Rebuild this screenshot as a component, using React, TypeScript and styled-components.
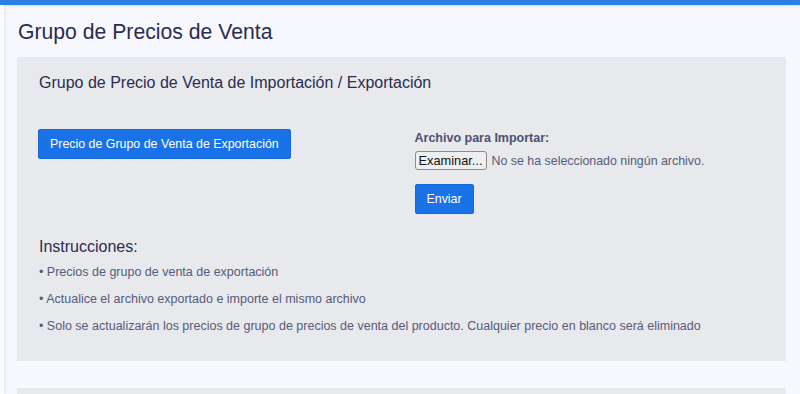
import React from "react";
import styled, { createGlobalStyle } from "styled-components";

const Global = createGlobalStyle`
  html, body { margin: 0; padding: 0; background: #f6f8fd; }
  body { font-family: "Liberation Sans", Arial, sans-serif; overflow: hidden; }
  * { box-sizing: border-box; }
`;

const TopBar = styled.div`
  height: 5px;
  background: #2a7fe3;
  box-shadow: 0 1px 2px rgba(40, 60, 120, 0.15);
`;

const Shell = styled.div`
  display: flex;
  height: 389px;
  overflow: hidden;
`;

const SideEdge = styled.div`
  width: 4px;
  background: #fbfcfe;
  box-shadow: 1px 0 3px rgba(120, 130, 170, 0.18);
  flex: none;
`;

const Main = styled.main`
  flex: 1;
  padding: 14px 14px 0 13px;
  display: flex;
  flex-direction: column;
`;

const PageTitle = styled.h1`
  margin: 0 0 0 1px;
  font-size: 21.2px;
  font-weight: 400;
  line-height: 26px;
  color: #2b2c50;
`;

const Panel = styled.section<{ $top: number }>`
  background: #e8e9ed;
  margin-top: ${(p) => p.$top}px;
  padding: 15px 21px 27px 21px;
  flex: none;
`;

const PanelTitle = styled.h2`
  margin: 0 0 0 1px;
  font-size: 16px;
  font-weight: 400;
  line-height: 22px;
  color: #2b2c50;
`;

const Columns = styled.div`
  display: grid;
  grid-template-columns: 1fr 1fr;
  column-gap: 26px;
  margin-top: 35px;
`;

const Column = styled.div`
  display: flex;
  flex-direction: column;
  align-items: flex-start;
`;

const PrimaryButton = styled.button`
  font-family: "Liberation Sans", Arial, sans-serif;
  background: #1a72e8;
  color: #fff;
  border: 1px solid #1668d8;
  border-radius: 2px;
  font-size: 12.4px;
  height: 30px;
  padding: 0 11px;
  line-height: 28px;
  cursor: pointer;
`;

const Label = styled.label`
  margin-top: 2px;
  font-size: 12.5px;
  font-weight: 700;
  color: #4b5172;
  line-height: 15px;
`;

const FileRow = styled.div`
  display: flex;
  align-items: center;
  gap: 5px;
  margin-top: 5px;
`;

const BrowseButton = styled.span`
  display: inline-block;
  height: 19px;
  padding: 0 3px;
  border: 1px solid #8a8a8a;
  border-radius: 3px;
  background: #efefef;
  color: #111;
  font-size: 12.8px;
  line-height: 17px;
`;

const FileHint = styled.span`
  font-size: 12.4px;
  color: #555b7a;
`;

const SendButton = styled(PrimaryButton)`
  margin-top: 14px;
  padding: 0 11px;
`;

const InstrTitle = styled.h3`
  margin: 23px 0 0 1px;
  font-size: 16px;
  font-weight: 400;
  line-height: 20px;
  color: #2b2c50;
`;

const List = styled.ul`
  list-style: none;
  margin: 7px 0 0 1px;
  padding: 0;
  display: flex;
  flex-direction: column;
  gap: 11px;
`;

const Item = styled.li`
  font-size: 12.5px;
  line-height: 16px;
  color: #555b7a;
`;

const items = [
  "Precios de grupo de venta de exportación",
  "Actualice el archivo exportado e importe el mismo archivo",
  "Solo se actualizarán los precios de grupo de precios de venta del producto. Cualquier precio en blanco será eliminado",
];

export default function App() {
  return (
    <>
      <Global />
      <TopBar />
      <Shell>
        <SideEdge />
        <Main>
          <PageTitle>Grupo de Precios de Venta</PageTitle>
          <Panel $top={12}>
            <PanelTitle>Grupo de Precio de Venta de Importación / Exportación</PanelTitle>
            <Columns>
              <Column>
                <PrimaryButton>Precio de Grupo de Venta de Exportación</PrimaryButton>
              </Column>
              <Column>
                <Label>Archivo para Importar:</Label>
                <FileRow>
                  <BrowseButton>Examinar...</BrowseButton>
                  <FileHint>No se ha seleccionado ningún archivo.</FileHint>
                </FileRow>
                <SendButton>Enviar</SendButton>
              </Column>
            </Columns>
            <InstrTitle>Instrucciones:</InstrTitle>
            <List>
              {items.map((t) => (
                <Item key={t}>• {t}</Item>
              ))}
            </List>
          </Panel>
          <Panel $top={27} style={{ minHeight: 40 }} />
        </Main>
      </Shell>
    </>
  );
}
